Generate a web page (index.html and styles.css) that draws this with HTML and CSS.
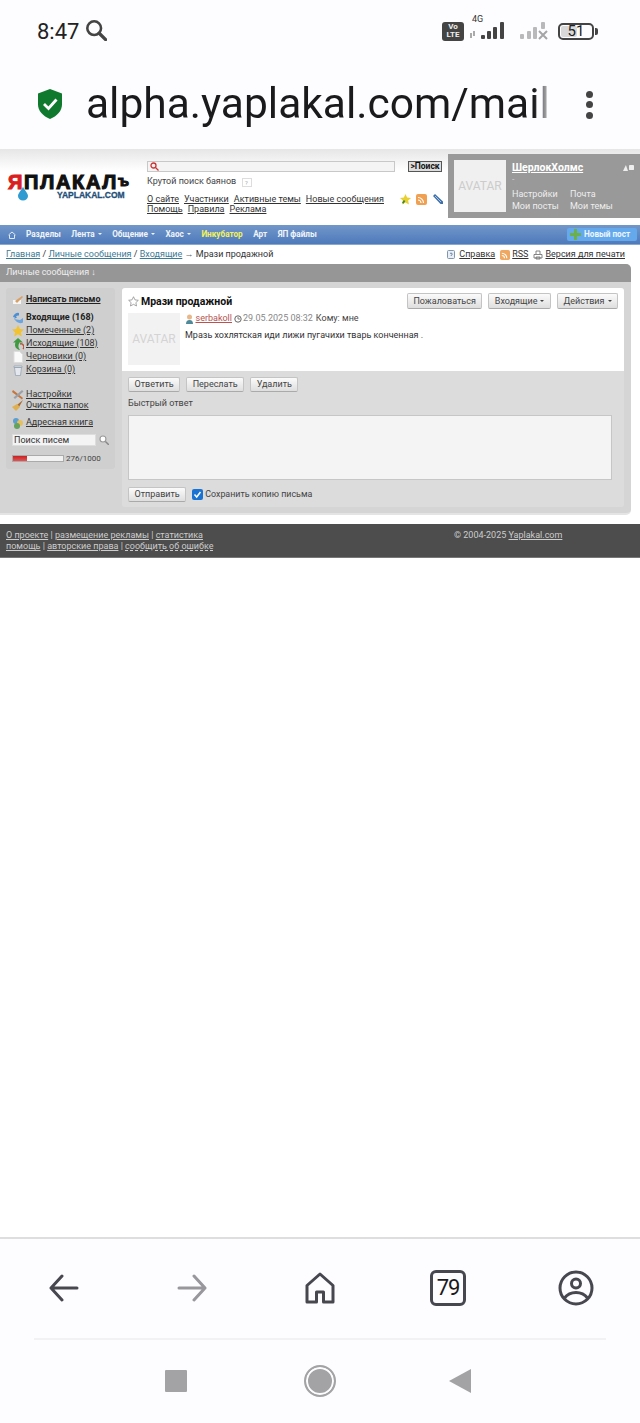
FILE: index.html
```html
<!DOCTYPE html>
<html lang="ru">

<head>
    <meta charset="UTF-8">
    <meta name="viewport" content="width=device-width, initial-scale=1.0">
    <title>Личные сообщения - ЯПлакалъ</title>
    <link rel="stylesheet" href="styles.css">
</head>

<body>

    <!-- phone status bar -->
    <div class="statusbar">
        <span class="clock">8:47</span>
        <svg class="status-search" width="22" height="22" viewBox="0 0 24 24" fill="none" stroke="#444" stroke-width="2.8">
            <circle cx="10" cy="10" r="7.5" />
            <path d="M15.5 15.5l7 7" stroke-linecap="round" stroke-width="3.6" />
        </svg>
        <div class="status-right">
            <div class="volte">Vo<br>LTE</div>
            <div class="signal">
                <span class="signal-label">4G</span>
                <svg width="40" height="22" viewBox="0 0 40 22" fill="#444">
                    <rect x="0" y="13" width="2" height="5" fill="#aaa" />
                    <rect x="3" y="11" width="2" height="5" fill="#aaa" />
                    <rect x="11" y="15" width="4" height="4" rx="1" />
                    <rect x="17" y="11" width="4" height="8" rx="1" />
                    <rect x="23" y="7" width="4" height="12" rx="1" />
                    <rect x="30" y="2" width="4" height="17" rx="1" />
                </svg>
            </div>
            <svg class="signal-off" width="30" height="22" viewBox="0 0 30 22" fill="#b9b9bb">
                <rect x="2" y="14" width="4" height="5" rx="1" />
                <rect x="9" y="11" width="4" height="8" rx="1" />
                <rect x="15" y="7" width="4" height="12" rx="1" />
                <rect x="23" y="2" width="4" height="7" rx="1" />
                <path d="M21 11l8 8M29 11l-8 8" stroke="#a5a5a7" stroke-width="2" fill="none" />
            </svg>
            <div class="battery"><span class="battery-level"></span><span class="battery-num">51</span></div>
            <span class="battery-tip"></span>
        </div>
    </div>

    <!-- browser address bar -->
    <div class="urlbar">
        <svg class="shield" width="26" height="30" viewBox="0 0 26 30">
            <path d="M13 0l12 4.5v11c0 6.5-5 11.5-12 14.5C6 27 1 22 1 15.5v-11z" fill="#0f7a2e" />
            <path d="M7 15l4.5 4.500L19.500 10.500" fill="none" stroke="#fff" stroke-width="2.8" />
        </svg>
        <div class="url">alpha.yaplakal.com/mail</div>
        <div class="dots"><span></span><span></span><span></span></div>
    </div>

    <div class="site">
        <div class="site-header">
            <div class="logo">
                <div class="logo-word"><span class="logo-red">Я</span>ПЛАКАЛ<span class="logo-end">ъ</span></div>
                <svg class="logo-drop" width="10" height="15" viewBox="0 0 12 17">
                    <path d="M6 0C7 4 12 7.5 12 11.5A6 5.5 0 0 1 0 11.5C0 7.5 5 4 6 0z" fill="#2f9bd0" />
                </svg>
                <div class="logo-sub">YAPLAKAL.COM</div>
            </div>

            <div class="search-col">
                <div class="search-row">
                    <div class="search-input">
                        <svg width="9" height="9" viewBox="0 0 9 9" fill="none" stroke="#c33" stroke-width="1.3">
                            <circle cx="3.5" cy="3.5" r="2.5" />
                            <path d="M5.5 5.5L8.5 8.5" />
                        </svg>
                    </div>
                    <div class="search-btn">&gt;Поиск</div>
                </div>
                <div class="search-note">Крутой поиск баянов <span class="note-q">?</span></div>
                <div class="top-links">
                    <div class="top-links-row">
                        <a href="#">О сайте</a><a href="#">Участники</a><a href="#">Активные темы</a><a href="#">Новые сообщения</a>
                        <div class="top-icons">
                            <svg width="11" height="11" viewBox="0 0 12 12"><path d="M6 0l1.800 3.900 4.200.5-3.100 2.800.8 4.200L6 9.300 2.300 11.400l.8-4.200L0 4.400l4.200-.5z" fill="#e8d030" /><path d="M3 10l2-3" stroke="#3a8a3a" stroke-width="2" /></svg>
                            <svg width="11" height="11" viewBox="0 0 11 11"><rect width="11" height="11" rx="2" fill="#f0a050" /><path d="M2 3.5A5.500 5.500 0 0 1 7.500 9M2 6a3 3 0 0 1 3 3" fill="none" stroke="#fff" stroke-width="1.2" /></svg>
                            <svg width="12" height="12" viewBox="0 0 12 12"><path d="M1 3l2-2 8 7.500V11H8.500z" fill="#3f6fa8" /><path d="M3 3l6 6" stroke="#a8c4e4" /></svg>
                        </div>
                    </div>
                    <div class="top-links-row">
                        <a href="#">Помощь</a><a href="#">Правила</a><a href="#">Реклама</a>
                    </div>
                </div>
            </div>

            <div class="user-panel">
                <div class="avatar">AVATAR</div>
                <div class="user-info">
                    <div class="user-top">
                        <a href="#" class="user-name">ШерлокХолмс</a>
                        <div class="user-icons">
                            <svg width="5" height="6" viewBox="0 0 6 7"><path d="M3.500 0L6 7H0z" fill="#eee" /></svg>
                            <svg width="5" height="5" viewBox="0 0 6 6"><rect width="6" height="6" rx="1" fill="#eee" /></svg>
                        </div>
                    </div>
                    <div class="user-dash">-</div>
                    <div class="user-grid">
                        <span>Настройки</span><span>Почта</span>
                        <span>Мои посты</span><span>Мои темы</span>
                    </div>
                </div>
            </div>
        </div>

        <div class="mainnav">
            <svg class="nav-home" width="8" height="8" viewBox="0 0 8 8" fill="none" stroke="#dfe8f5">
                <path d="M.5 4L4 1l3.500 3M1.500 4v3.500h5V4" />
            </svg>
            <span class="nav-item">Разделы</span>
            <span class="nav-item nav-drop">Лента</span>
            <span class="nav-item nav-drop">Общение</span>
            <span class="nav-item nav-drop">Хаос</span>
            <span class="nav-item nav-yellow">Инкубатор</span>
            <span class="nav-item">Арт</span>
            <span class="nav-item">ЯП файлы</span>
            <div class="new-post">
                <svg width="11" height="11" viewBox="0 0 11 11"><path d="M4 0h3v4h4v3H7v4H4V7H0V4h4z" fill="#6cb04a" /></svg>
                Новый пост
            </div>
        </div>

        <div class="crumbs">
            <div class="crumbs-left">
                <a href="#">Главная</a> / <a href="#">Личные сообщения</a> / <a href="#">Входящие</a> <span class="crumb-arrow">→</span> Мрази продажной
            </div>
            <div class="crumbs-right">
                <svg class="crumb-help" width="8" height="9" viewBox="0 0 8 9"><rect x=".5" y=".5" width="7" height="8" rx="1" fill="#e8eef5" stroke="#7f96ad" /><path d="M3 3.500q1-1 2 0T4 5.500v.5" fill="none" stroke="#4a6a8a" stroke-width=".8" /></svg>
                <a href="#">Справка</a>
                <svg class="crumb-rss" width="10" height="10" viewBox="0 0 11 11"><rect width="11" height="11" rx="2" fill="#f0a860" /><path d="M2 3.500A5.500 5.500 0 0 1 7.500 9M2 6a3 3 0 0 1 3 3" fill="none" stroke="#fff" stroke-width="1.2" /></svg>
                <a href="#">RSS</a>
                <svg class="crumb-print" width="10" height="10" viewBox="0 0 10 10" fill="none" stroke="#666" stroke-width=".8"><path d="M3 4V1h4v3M1 4.500h8v3.500H1zM3 7h4v2H3z" /></svg>
                <a href="#">Версия для печати</a>
            </div>
        </div>

        <div class="mail-block">
            <div class="mail-title">Личные сообщения ↓</div>
            <div class="mail-body">
                <div class="sidebar">
                    <div class="side-row side-write">
                        <svg width="12" height="11" viewBox="0 0 12 11"><path d="M1 6h8V10H1z" fill="#f6f6f6" /><path d="M3 7l7-5 1 1-6 6z" fill="#d9a066" /></svg>
                        <a href="#">Написать письмо</a>
                    </div>
                    <div class="side-group">
                        <div class="side-row side-current">
                            <svg width="12" height="12" viewBox="0 0 12 12"><path d="M7 1a5 5 0 0 0-6 4l2 .5L2 7 5 5.500 4 4.500a3 3 0 0 1 3-1z" fill="#4c8fd4" /><path d="M2 7l3 3a6 6 0 0 0 6 .5V6L8 8z" fill="#6aa5e0" /></svg>
                            Входящие (168)
                        </div>
                        <div class="side-row">
                            <svg width="12" height="12" viewBox="0 0 12 12"><path d="M6 0l1.800 3.900 4.200.5-3.100 2.800.8 4.200L6 9.300 2.300 11.400l.8-4.200L0 4.400l4.200-.5z" fill="#f2c230" /></svg>
                            <a href="#">Помеченные (2)</a>
                        </div>
                        <div class="side-row">
                            <svg width="12" height="12" viewBox="0 0 12 12"><path d="M6 0L1 4.500h2.500C2 8 4 11.500 8 12 6 10 6 7 7.500 4.500H11z" fill="#3f9a3f" /><path d="M8 6a3 3 0 0 1 3 5" fill="none" stroke="#b8553a" stroke-width="1.5" /></svg>
                            <a href="#">Исходящие (108)</a>
                        </div>
                        <div class="side-row">
                            <svg width="12" height="12" viewBox="0 0 12 12"><path d="M2 .500h5.500l3 3V11.500H2z" fill="#fafafa" stroke="#ddd" /></svg>
                            <a href="#">Черновики (0)</a>
                        </div>
                        <div class="side-row">
                            <svg width="12" height="12" viewBox="0 0 12 12" fill="#e4e8ee" stroke="#98a4b0" stroke-width=".8"><path d="M2.500 3.500h7l-1 8h-5zM2 2h8v1.500H2z" /></svg>
                            <a href="#">Корзина (0)</a>
                        </div>
                    </div>
                    <div class="side-group side-tight">
                        <div class="side-row">
                            <svg width="12" height="11" viewBox="0 0 12 11"><path d="M1 1l10 8-1 1.500L0 3z" fill="#c8743a" /><path d="M10 1l1.500 1.500L3 10 1.500 8.500z" fill="#9aa0a8" /></svg>
                            <a href="#">Настройки</a>
                        </div>
                        <div class="side-row">
                            <svg width="12" height="11" viewBox="0 0 12 11"><path d="M11 0L5 5l2 2z" fill="#a86a30" /><path d="M0 7l5-3 3 3-4 4z" fill="#e0b050" /></svg>
                            <a href="#">Очистка папок</a>
                        </div>
                    </div>
                    <div class="side-row side-book">
                        <svg width="12" height="12" viewBox="0 0 12 12"><circle cx="4" cy="4" r="3" fill="#5a9fd0" /><circle cx="8" cy="6" r="3" fill="#e4c060" /><circle cx="5" cy="9" r="3" fill="#63a35c" /></svg>
                        <a href="#">Адресная книга</a>
                    </div>
                    <div class="side-search">
                        <div class="side-search-input">Поиск писем</div>
                        <svg width="10" height="10" viewBox="0 0 10 10" fill="none" stroke="#999" stroke-width="1.1"><circle cx="4" cy="4" r="3" fill="#fff" /><path d="M6.500 6.500L10 10" stroke="#888" stroke-width="1.4" /></svg>
                    </div>
                    <div class="quota">
                        <div class="quota-bar"><div class="quota-fill" style="width: 27.6%"></div></div>
                        <span>276/1000</span>
                    </div>
                </div>

                <div class="mail-main">
                    <div class="message">
                        <div class="message-head">
                            <svg width="11" height="11" viewBox="0 0 12 12"><path d="M6 .800l1.600 3.400 3.700.5-2.700 2.500.7 3.700L6 9.100l-3.300 1.800.7-3.700L.700 4.700l3.700-.5z" fill="#fff" stroke="#888" stroke-width=".8" /></svg>
                            <h1>Мрази продажной</h1>
                            <div class="message-actions">
                                <span class="btn btn-small">Пожаловаться</span>
                                <span class="btn btn-small btn-caret">Входящие</span>
                                <span class="btn btn-small btn-caret">Действия</span>
                            </div>
                        </div>
                        <div class="message-body">
                            <div class="avatar avatar-light">AVATAR</div>
                            <div class="message-text">
                                <div class="message-meta">
                                    <svg width="9" height="10" viewBox="0 0 9 10"><circle cx="4.500" cy="3" r="2.500" fill="#e8b88a" /><path d="M1 10a3.500 4 0 0 1 7 0z" fill="#4f8a9a" /></svg>
                                    <a href="#" class="author">serbakoll</a>
                                    <svg width="8" height="8" viewBox="0 0 8 8" fill="none" stroke="#666"><circle cx="4" cy="4" r="3.200" /><path d="M4 2v2h2" stroke-width=".8" /></svg>
                                    <span class="meta-date">29.05.2025 08:32</span>
                                    <span class="meta-to">Кому: мне</span>
                                </div>
                                <p>Мразь хохлятская иди лижи пугачихи тварь конченная .</p>
                            </div>
                        </div>
                    </div>

                    <div class="reply">
                        <div class="reply-buttons">
                            <span class="btn">Ответить</span>
                            <span class="btn">Переслать</span>
                            <span class="btn">Удалить</span>
                        </div>
                        <div class="reply-label">Быстрый ответ</div>
                        <div class="reply-box"></div>
                        <div class="reply-send">
                            <span class="btn">Отправить</span>
                            <span class="check">
                                <svg width="9" height="9" viewBox="0 0 9 9"><path d="M1.500 4.500L3.700 7 7.500 2" fill="none" stroke="#fff" stroke-width="1.5" /></svg>
                            </span>
                            <span class="check-label">Сохранить копию письма</span>
                        </div>
                    </div>
                </div>
            </div>
        </div>

        <div class="site-footer">
            <div class="footer-left">
                <div><a href="#">О проекте</a> | <a href="#">размещение рекламы</a> | <a href="#">статистика</a></div>
                <div><a href="#">помощь</a> | <a href="#">авторские права</a> | <a href="#" class="dashed">сообщить об ошибке</a></div>
            </div>
            <div class="footer-right">© 2004-2025 <a href="#">Yaplakal.com</a></div>
        </div>
    </div>

    <div class="blank"></div>

    <!-- browser bottom toolbar -->
    <div class="toolbar">
        <div class="toolbar-cell">
            <svg width="30" height="28" viewBox="0 0 30 28" fill="none" stroke="#47474f" stroke-width="3" stroke-linecap="round" stroke-linejoin="round">
                <path d="M28 14H2M13 2L2 14l11 12" />
            </svg>
        </div>
        <div class="toolbar-cell">
            <svg width="30" height="28" viewBox="0 0 30 28" fill="none" stroke="#97979c" stroke-width="3" stroke-linecap="round" stroke-linejoin="round">
                <path d="M2 14h26M17 2l11 12-11 12" />
            </svg>
        </div>
        <div class="toolbar-cell">
            <svg width="30" height="32" viewBox="0 0 30 32" fill="none" stroke="#47474f" stroke-width="3" stroke-linejoin="round">
                <path d="M15 2L2 13.500V30h9.500V20h7v10H28V13.500z" />
            </svg>
        </div>
        <div class="toolbar-cell">
            <div class="tabs-count">79</div>
        </div>
        <div class="toolbar-cell">
            <svg width="36" height="36" viewBox="0 0 36 36" fill="none" stroke="#47474f" stroke-width="3">
                <circle cx="18" cy="18" r="16" />
                <circle cx="18" cy="13.500" r="4.500" />
                <path d="M6.500 28c3-4 7-5.500 11.500-5.500S26.500 24 29.500 28" />
            </svg>
        </div>
    </div>

    <div class="sysnav">
        <span class="sys-square"></span>
        <span class="sys-circle"></span>
        <svg class="sys-back" width="22" height="24" viewBox="0 0 22 24"><path d="M22 0v24L0 12z" fill="#a3a3a6" /></svg>
    </div>

</body>

</html>
```

FILE: styles.css
```css
body {
    font-family: "Roboto", "Liberation Sans", sans-serif;
    background-color: #fdfcff;
    margin: 0;
    padding: 0;
    width: 640px;
    height: 1423px;
    display: flex;
    flex-direction: column;
    overflow: hidden;
    color: #333;
}

a {
    color: inherit;
}

/* Phone status bar */
.statusbar {
    height: 60px;
    flex-shrink: 0;
    display: flex;
    align-items: center;
    padding: 2px 42px 0 37px;
    box-sizing: border-box;
}

.clock {
    font-size: 22px;
    color: #222;
}

.status-search {
    margin-left: 6px;
    margin-top: -2px;
}

.status-right {
    margin-left: auto;
    display: flex;
    align-items: center;
}

.volte {
    width: 22px;
    height: 19px;
    background: #444;
    color: #eee;
    border-radius: 3px;
    font-size: 8px;
    font-weight: bold;
    line-height: 8.5px;
    text-align: center;
    padding-top: 1px;
    box-sizing: border-box;
}

.signal {
    position: relative;
    margin-left: 6px;
    width: 40px;
}

.signal svg {
    display: block;
}

.signal-label {
    position: absolute;
    left: 2px;
    top: -6px;
    font-size: 9px;
    color: #333;
}

.signal-off {
    margin-left: 8px;
}

.battery {
    margin-left: 10px;
    width: 36px;
    height: 17px;
    border: 2px solid #444;
    border-radius: 5px;
    box-sizing: border-box;
    position: relative;
    display: flex;
    align-items: center;
    justify-content: center;
}

.battery-level {
    position: absolute;
    left: 1px;
    top: 1px;
    bottom: 1px;
    width: 16px;
    background: #d8d8d8;
    border-radius: 2px;
}

.battery-num {
    position: relative;
    font-size: 15px;
    color: #222;
    line-height: 13px;
}

.battery-tip {
    width: 3px;
    height: 7px;
    margin-left: 1px;
    background: #444;
    border-radius: 0 2px 2px 0;
}

/* Address bar */
.urlbar {
    height: 89px;
    flex-shrink: 0;
    display: flex;
    align-items: center;
    padding-left: 37px;
}

.shield {
    flex-shrink: 0;
    margin-top: -1px;
}

.url {
    margin-left: 23px;
    width: 462px;
    flex-shrink: 0;
    font-size: 42.5px;
    color: #1a1a1c;
    white-space: nowrap;
    overflow: hidden;
    line-height: 50px;
    margin-top: -2px;
    -webkit-mask-image: linear-gradient(90deg, #000 97%, rgba(0, 0, 0, 0.3));
    mask-image: linear-gradient(90deg, #000 97%, rgba(0, 0, 0, 0.3));
}

.dots {
    margin-left: 38px;
    display: flex;
    flex-direction: column;
    gap: 3.5px;
}

.dots span {
    width: 7px;
    height: 7px;
    background: #444;
    border-radius: 50%;
}

/* Site */
.site {
    flex-shrink: 0;
    background: white;
    font-size: 9px;
    line-height: 11px;
}

.site-header {
    height: 76px;
    box-sizing: border-box;
    display: flex;
    background: linear-gradient(#e6e6e6, #fff 22px);
}

.logo {
    width: 147px;
    flex-shrink: 0;
    position: relative;
}

.logo-word {
    position: absolute;
    left: 8px;
    top: 23px;
    font-family: "Liberation Sans", sans-serif;
    font-size: 20px;
    font-weight: bold;
    line-height: 18px;
    letter-spacing: 1.7px;
    color: #111;
    -webkit-text-stroke: 1.1px #111;
    white-space: nowrap;
}

.logo-red {
    color: #d92020;
    -webkit-text-stroke: 1.1px #d92020;
}

.logo-end {
    font-size: 15px;
    vertical-align: 3px;
}

.logo-drop {
    position: absolute;
    left: 18px;
    top: 37px;
}

.logo-sub {
    position: absolute;
    left: 57px;
    top: 41px;
    font-family: "Liberation Sans", sans-serif;
    font-size: 8.5px;
    font-weight: bold;
    line-height: 10px;
    color: #1f4f78;
    -webkit-text-stroke: 0.3px #1f4f78;
    white-space: nowrap;
}

.search-col {
    width: 301px;
    flex-shrink: 0;
    padding-top: 12px;
    box-sizing: border-box;
}

.search-row {
    display: flex;
    align-items: center;
    height: 11px;
}

.search-input {
    width: 248px;
    height: 11px;
    box-sizing: border-box;
    border: 1px solid #c8c8c8;
    background: #f4f4f4;
    display: flex;
    align-items: center;
    padding-left: 2px;
}

.search-btn {
    margin-left: 13px;
    width: 34px;
    height: 11px;
    box-sizing: border-box;
    border: 1px solid #555;
    background: #ddd;
    color: #111;
    font-size: 8.5px;
    font-weight: bold;
    line-height: 9px;
    text-align: center;
    white-space: nowrap;
}

.search-note {
    margin-top: 4px;
    color: #444;
    white-space: nowrap;
}

.note-q {
    display: inline-block;
    width: 8px;
    height: 7px;
    margin-left: 3px;
    border: 1px solid #ddd;
    color: #aaa;
    font-size: 6px;
    line-height: 7px;
    text-align: center;
    vertical-align: -1px;
}

.top-links {
    margin-top: 7px;
}

.top-links-row {
    display: flex;
    align-items: center;
    gap: 5px;
    height: 10.5px;
    white-space: nowrap;
}

.top-icons {
    margin-left: 11px;
    display: flex;
    align-items: center;
    gap: 5px;
}

.user-panel {
    width: 192px;
    height: 64px;
    margin-top: 5px;
    background: #999;
    padding: 6px;
    box-sizing: border-box;
    display: flex;
    gap: 6px;
}

.avatar {
    width: 52px;
    height: 52px;
    flex-shrink: 0;
    background: #f0f0f0;
    color: #ccc;
    font-size: 12px;
    line-height: 52px;
    text-align: center;
}

.user-info {
    flex: 1;
    color: #eee;
    padding-top: 2px;
}

.user-top {
    display: flex;
    justify-content: space-between;
    align-items: center;
}

.user-name {
    color: white;
    font-size: 10.5px;
    font-weight: bold;
}

.user-icons {
    display: flex;
    gap: 1px;
    align-items: center;
}

.user-dash {
    margin-top: 1px;
    height: 15px;
    color: #ccc;
}

.user-grid {
    display: grid;
    grid-template-columns: 58px 1fr;
    row-gap: 1px;
    white-space: nowrap;
}

.mainnav {
    height: 20px;
    display: flex;
    align-items: center;
    background: linear-gradient(#7297c9, #4e7abb);
    border-bottom: 1px solid #87a7d4;
    box-sizing: border-box;
    color: #f0f4fa;
    font-size: 8.2px;
    font-weight: bold;
    white-space: nowrap;
    padding-left: 8px;
    gap: 10.5px;
}

.nav-item:first-of-type {
    margin-left: -0.5px;
}

.nav-drop::after {
    content: "";
    display: inline-block;
    margin-left: 3px;
    vertical-align: 2px;
    border-left: 2.5px solid transparent;
    border-right: 2.5px solid transparent;
    border-top: 2.5px solid #f0f4fa;
}

.nav-yellow {
    color: #f2f25a;
}

.new-post {
    margin-left: auto;
    margin-right: 3px;
    width: 70px;
    height: 13px;
    box-sizing: border-box;
    background: #63a9ec;
    border-radius: 2px;
    display: flex;
    align-items: center;
    gap: 3px;
    padding-left: 3px;
    color: #eef6ff;
}

.crumbs {
    height: 19px;
    display: flex;
    justify-content: space-between;
    align-items: center;
    padding: 0 15px 0 6px;
    white-space: nowrap;
    color: #333;
}

.crumbs-left a {
    color: #3d7a94;
}

.crumb-arrow {
    color: #666;
}

.crumbs-right {
    display: flex;
    align-items: center;
    gap: 2px;
}

.crumb-help {
    margin-right: 2px;
}

.crumb-rss,
.crumb-print {
    margin-left: 3px;
}

/* Mail block */
.mail-block {
    width: 631px;
    background: #d5d5d5;
    border-radius: 0 5px 5px 0;
    border-bottom: 2px solid #e4e4e4;
    box-sizing: border-box;
    height: 251px;
}

.mail-title {
    height: 18px;
    background: #969696;
    border-radius: 0 5px 0 0;
    color: #eee;
    padding-left: 6px;
    line-height: 17px;
    white-space: nowrap;
}

.mail-body {
    display: flex;
    padding: 6px 7px 0 6px;
    gap: 7px;
}

.sidebar {
    width: 109px;
    height: 181px;
    flex-shrink: 0;
    background: #cfcfcf;
    border-radius: 3px;
    box-sizing: border-box;
    padding: 5px 6px 0;
    white-space: nowrap;
}

.side-row {
    display: flex;
    align-items: center;
    gap: 2px;
    height: 13px;
    color: #333;
}

.side-row svg {
    flex-shrink: 0;
}

.side-write {
    font-weight: bold;
    color: #222;
    margin-bottom: 5px;
}

.side-current {
    font-weight: bold;
    color: #222;
}

.side-group {
    margin-bottom: 13px;
}

.side-tight {
    margin-bottom: 5px;
}

.side-tight .side-row {
    height: 11px;
}

.side-search {
    display: flex;
    align-items: center;
    gap: 3px;
    margin-top: 5px;
}

.side-search-input {
    width: 85px;
    height: 12px;
    box-sizing: border-box;
    background: #f4f4f4;
    border: 1px solid #ddd;
    line-height: 10px;
    padding-left: 1px;
}

.quota {
    display: flex;
    align-items: center;
    gap: 2px;
    margin-top: 7px;
    font-size: 8px;
    color: #444;
}

.quota-bar {
    width: 52px;
    height: 7px;
    box-sizing: border-box;
    background: #f2f2f2;
    border: 1px solid #aaa;
}

.quota-fill {
    height: 100%;
    background: linear-gradient(#c92222, #e25555);
}

.mail-main {
    width: 502px;
    height: 219px;
    flex-shrink: 0;
    background: #dcdcdc;
    border-radius: 3px;
}

.message {
    height: 83px;
    background: white;
    border-radius: 3px 3px 0 0;
    box-sizing: border-box;
    padding: 5px 6px 0;
}

.message-head {
    display: flex;
    align-items: center;
    height: 16px;
}

.message-head h1 {
    margin: 0 0 0 2px;
    font-size: 10.5px;
    font-weight: bold;
    color: #111;
    white-space: nowrap;
}

.message-actions {
    margin-left: auto;
    display: flex;
    gap: 6px;
}

.btn {
    display: inline-block;
    height: 15px;
    box-sizing: border-box;
    background: linear-gradient(#fbfbfb, #dedede);
    border: 1px solid #c4c4c4;
    border-bottom-color: #aaa;
    border-radius: 2px;
    padding: 0 5.5px;
    line-height: 13px;
    color: #444;
    text-align: center;
    white-space: nowrap;
}

.btn-small {
    height: 16px;
    line-height: 14px;
}

.btn-caret::after {
    content: "";
    display: inline-block;
    margin-left: 3px;
    vertical-align: 2px;
    border-left: 2.5px solid transparent;
    border-right: 2.5px solid transparent;
    border-top: 2.5px solid #444;
}

.message-body {
    display: flex;
    gap: 5px;
    margin-top: 4px;
}

.avatar-light {
    background: #f2f2f2;
    color: #d4d4d4;
}

.message-meta {
    display: flex;
    align-items: center;
    height: 11px;
    gap: 1.5px;
    color: #444;
    white-space: nowrap;
}

.author {
    color: #b8534f;
}

.meta-date {
    color: #888;
}

.meta-to {
    margin-left: 1.5px;
}

.message-text p {
    margin: 6px 0 0;
    color: #333;
    white-space: nowrap;
}

.reply {
    padding: 6px 6px 0;
}

.reply-buttons {
    display: flex;
    gap: 6px;
}

.reply-label {
    margin-top: 6px;
    color: #444;
}

.reply-box {
    width: 484px;
    height: 65px;
    margin-top: 6px;
    box-sizing: border-box;
    background: #f4f4f4;
    border: 1px solid #c6c6c6;
}

.reply-send {
    display: flex;
    align-items: center;
    margin-top: 7px;
}

.check {
    width: 11px;
    height: 11px;
    margin-left: 6px;
    background: #1a73d2;
    border-radius: 2px;
    display: flex;
    align-items: center;
    justify-content: center;
}

.check-label {
    margin-left: 2px;
    font-size: 8.9px;
    color: #444;
    white-space: nowrap;
}

/* Footer */
.site-footer {
    margin-top: 9px;
    height: 34px;
    box-sizing: border-box;
    background: #4d4d4d;
    border-bottom: 1px solid #777;
    display: flex;
    padding: 6px 0 0 6px;
    color: #ccc;
    line-height: 11px;
    white-space: nowrap;
}

.footer-left {
    width: 448px;
    flex-shrink: 0;
}

.dashed {
    text-decoration-style: dashed;
}

.blank {
    flex: 1;
    background: white;
}

/* Browser bottom toolbar */
.toolbar {
    height: 101px;
    flex-shrink: 0;
    box-sizing: border-box;
    border-top: 2px solid #dedede;
    display: grid;
    grid-template-columns: repeat(5, 1fr);
    align-items: center;
    padding-bottom: 1px;
}

.toolbar-cell {
    display: flex;
    justify-content: center;
}

.tabs-count {
    width: 36px;
    height: 36px;
    box-sizing: border-box;
    border: 3px solid #47474f;
    border-radius: 6px;
    font-size: 22px;
    line-height: 30px;
    color: #1a1a1c;
    text-align: center;
    letter-spacing: -1px;
}

.sysnav {
    height: 85px;
    flex-shrink: 0;
    margin: 0 34px;
    border-top: 2px solid #f2f2f4;
    box-sizing: border-box;
    display: flex;
    align-items: center;
    padding: 0 0 2px 131px;
}

.sys-square {
    width: 22px;
    height: 22px;
    background: #a3a3a6;
    border-radius: 1px;
}

.sys-circle {
    width: 32px;
    height: 32px;
    margin-left: 117px;
    box-sizing: border-box;
    border: 2px solid #a3a3a6;
    border-radius: 50%;
    background: #a3a3a6;
    box-shadow: inset 0 0 0 2px #fdfcff;
}

.sys-back {
    margin-left: 113px;
}
```
